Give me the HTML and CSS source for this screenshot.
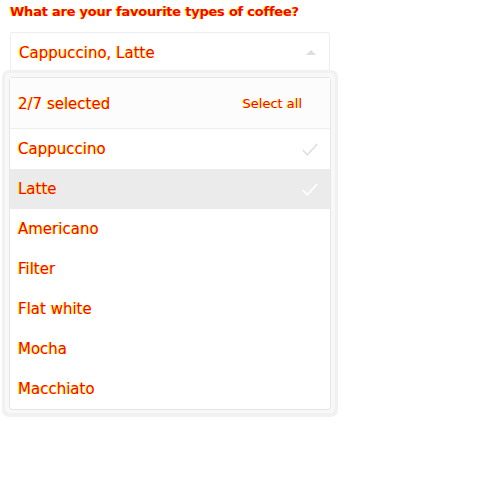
FILE: index.html
```html
<!DOCTYPE html>
<html>
<head>
<meta charset="utf-8">
<link rel="stylesheet" href="styles.css">
</head>
<body>
<div class="field">
  <div class="label">What are your favourite types of coffee?</div>
  <div class="select">
    <span class="value txt">Cappuccino, Latte</span>
    <span class="caret"></span>
  </div>
  <div class="menu">
    <div class="ring">
      <div class="panel">
        <div class="head">
          <span class="txt">2/7 selected</span>
          <span class="all txt">Select all</span>
        </div>
        <div class="item"><span class="txt">Cappuccino</span><svg class="check" viewBox="0 0 16 13" width="16" height="13"><path d="M0.8 7l4.6 4.8L15.2 1" fill="none" stroke="currentColor" stroke-width="1.6"/></svg></div>
        <div class="item on"><span class="txt">Latte</span><svg class="check" viewBox="0 0 16 13" width="16" height="13"><path d="M0.8 7l4.6 4.8L15.2 1" fill="none" stroke="currentColor" stroke-width="1.6"/></svg></div>
        <div class="item"><span class="txt">Americano</span></div>
        <div class="item"><span class="txt">Filter</span></div>
        <div class="item"><span class="txt">Flat white</span></div>
        <div class="item"><span class="txt">Mocha</span></div>
        <div class="item"><span class="txt">Macchiato</span></div>
      </div>
    </div>
  </div>
</div>
</body>
</html>
```
FILE: styles.css
```css
html, body { margin: 0; padding: 0; background: #fff; }
body { font-family: "DejaVu Sans", sans-serif; }
.field { padding: 3px 0 0 2px; width: 336px; }
.txt { color: #f00; text-shadow: -1px 0 #ff0; }
.label { margin-left: 8px; font-size: 13px; font-weight: bold; letter-spacing: -0.23px; line-height: 18px; color: #f00; text-shadow: -1px 0 #ff0; }
.select {
  margin: 11px 0 0 8px; width: 320px; height: 40px; box-sizing: border-box;
  border: 1px solid #eee; border-radius: 2px;
  display: flex; align-items: center; justify-content: space-between;
  padding: 1px 13px 0 8px;
}
.value { font-size: 15px; }
.caret { width: 0; height: 0; border-left: 5px solid transparent; border-right: 5px solid transparent; border-bottom: 5px solid #ddd; }
.menu {
  margin-top: -2px; width: 336px; box-sizing: border-box;
  background: #f1f1f1; border-radius: 7px; padding: 3px 3px 4px 3px;
}
.ring { background: #f8f8f8; border-radius: 5px; padding: 4px 4px 3px 4px; }
.panel {
  background: #fff; border: 1px solid #e6e6e6; border-radius: 3px;
}
.head {
  height: 51px; background: #fcfcfc; border-bottom: 1px solid #eee;
  display: flex; align-items: center; justify-content: space-between;
  padding: 1px 28px 0 8px; box-sizing: border-box; font-size: 15px;
}
.all { font-size: 13px; }
.item {
  height: 40px; display: flex; align-items: center; justify-content: space-between;
  padding: 0 12px 0 8px; font-size: 15px;
}
.item.on { background: #ebebeb; }
.check { color: #dedede; }
.item.on .check { color: #fff; }
```
